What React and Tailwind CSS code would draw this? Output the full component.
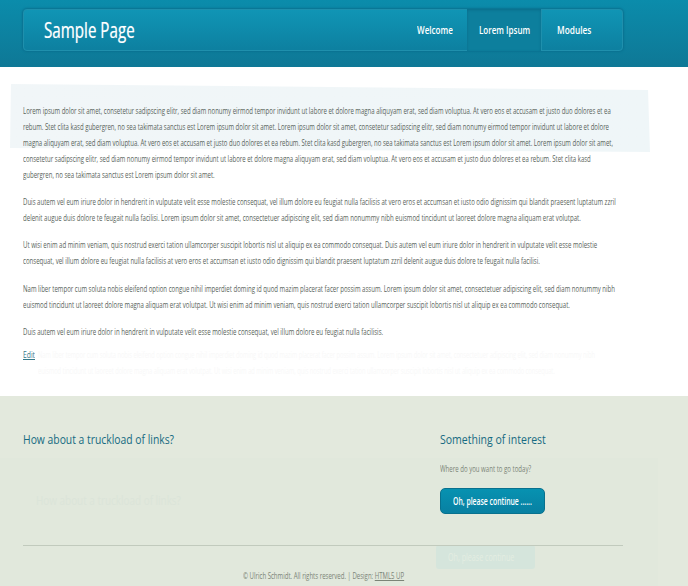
import { useLayoutEffect, useRef } from "react";

// One line of condensed type, set to an exact width.
function Fit({ w, className = "", children }) {
  const ref = useRef(null);
  useLayoutEffect(() => {
    const fit = () => {
      const el = ref.current;
      if (el) el.style.transform = `scaleX(${w / el.offsetWidth})`;
    };
    fit();
    document.fonts.ready.then(fit);
  }, [w]);
  return (
    <span className="block overflow-visible" style={{ width: w }}>
      <span ref={ref} className={`inline-block origin-left whitespace-nowrap ${className}`}>
        {children}
      </span>
    </span>
  );
}

const paragraphs = [
  [
    [588, "Lorem ipsum dolor sit amet, consetetur sadipscing elitr, sed diam nonumy eirmod tempor invidunt ut labore et dolore magna aliquyam erat, sed diam voluptua. At vero eos et accusam et justo duo dolores et ea"],
    [586, "rebum. Stet clita kasd gubergren, no sea takimata sanctus est Lorem ipsum dolor sit amet. Lorem ipsum dolor sit amet, consetetur sadipscing elitr, sed diam nonumy eirmod tempor invidunt ut labore et dolore"],
    [590, "magna aliquyam erat, sed diam voluptua. At vero eos et accusam et justo duo dolores et ea rebum. Stet clita kasd gubergren, no sea takimata sanctus est Lorem ipsum dolor sit amet. Lorem ipsum dolor sit amet,"],
    [568, "consetetur sadipscing elitr, sed diam nonumy eirmod tempor invidunt ut labore et dolore magna aliquyam erat, sed diam voluptua. At vero eos et accusam et justo duo dolores et ea rebum. Stet clita kasd"],
    [191.5, "gubergren, no sea takimata sanctus est Lorem ipsum dolor sit amet."],
  ],
  [
    [593, "Duis autem vel eum iriure dolor in hendrerit in vulputate velit esse molestie consequat, vel illum dolore eu feugiat nulla facilisis at vero eros et accumsan et iusto odio dignissim qui blandit praesent luptatum zzril"],
    [558, "delenit augue duis dolore te feugait nulla facilisi. Lorem ipsum dolor sit amet, consectetuer adipiscing elit, sed diam nonummy nibh euismod tincidunt ut laoreet dolore magna aliquam erat volutpat."],
  ],
  [
    [574, "Ut wisi enim ad minim veniam, quis nostrud exerci tation ullamcorper suscipit lobortis nisl ut aliquip ex ea commodo consequat. Duis autem vel eum iriure dolor in hendrerit in vulputate velit esse molestie"],
    [517, "consequat, vel illum dolore eu feugiat nulla facilisis at vero eros et accumsan et iusto odio dignissim qui blandit praesent luptatum zzril delenit augue duis dolore te feugait nulla facilisi."],
  ],
  [
    [592, "Nam liber tempor cum soluta nobis eleifend option congue nihil imperdiet doming id quod mazim placerat facer possim assum. Lorem ipsum dolor sit amet, consectetuer adipiscing elit, sed diam nonummy nibh"],
    [547, "euismod tincidunt ut laoreet dolore magna aliquam erat volutpat. Ut wisi enim ad minim veniam, quis nostrud exerci tation ullamcorper suscipit lobortis nisl ut aliquip ex ea commodo consequat."],
  ],
  [[360, "Duis autem vel eum iriure dolor in hendrerit in vulputate velit esse molestie consequat, vel illum dolore eu feugiat nulla facilisis."]],
];

function Header() {
  return (
    <header className="h-[67px] bg-linear-to-b from-[#0b8cab] to-[#0e7896] pl-[23px] pt-[9px]">
      <div className="flex h-[42px] w-[600px] rounded-[4px] border border-[#1f90ad] bg-linear-to-b from-[#1095b5] to-[#0d80a0] shadow-[0_0_2px_1px_#0a7190] text-white">
        <h1 className="flex-1 pl-[20px] text-[21px] font-medium leading-[41px] [text-shadow:0_0_1px_#fff8]">
          <Fit w={91}>Sample Page</Fit>
        </h1>
        <nav className="flex text-[11px] font-semibold leading-[39px]">
          <a className="w-[50px]"><Fit w={36}>Welcome</Fit></a>
          <a className="-my-px w-[75px] border-r border-[#1f90ad] bg-[#0d7f9d] pl-[12px] pt-px shadow-[inset_0_1px_3px_#0a6c8a]">
            <Fit w={51}>Lorem Ipsum</Fit>
          </a>
          <a className="w-[80px] pl-[15px]"><Fit w={34}>Modules</Fit></a>
        </nav>
      </div>
    </header>
  );
}

export default function App() {
  return (
    <div className="relative h-[586px] w-[688px] overflow-hidden bg-white font-['Open_Sans','Noto_Sans',sans-serif]">
      <Header />

      <main className="relative h-[329px] pl-[23px] pt-[36px] text-[9px] leading-[16px] text-[#59645b]">
        <div className="absolute left-[10px] top-[17px] h-[68px] w-[640px] bg-linear-to-r from-[#f1f6f8] to-[#eff6f8] [clip-path:polygon(1px_0,638px_6px,640px_68px,0_64px)]" />
        <div className="absolute left-[38px] top-[280px] text-[#f8f8f8]">
          <Fit w={557}>{paragraphs[3][0][1]}</Fit>
          <Fit w={517}>{paragraphs[3][1][1]}</Fit>
        </div>
        <div className="relative flex flex-col gap-[11.2px]">
          {paragraphs.map((lines, i) => (
            <p key={i}>
              {lines.map(([w, text]) => (
                <Fit key={text} w={w}>{text}</Fit>
              ))}
            </p>
          ))}
        </div>
        <a className="relative mt-[7px] block text-[#37798a]">
          <Fit w={12} className="underline underline-offset-1">Edit</Fit>
        </a>
      </main>

      <footer className="relative h-[190px] bg-[#e3e9dd] pl-[23px] text-[#7b8477]">
        <div className="absolute left-0 top-[62px] h-[128px] w-[658px] bg-[#e1e8dc]" />
        <div className="absolute left-[36px] top-[94px] text-[13px] leading-[20px] text-[#dbe4d9]">
          <Fit w={145}>How about a truckload of links?</Fit>
        </div>
        <div className="absolute left-[436px] top-[149px] h-[24px] w-[99px] rounded-[3px] bg-[#d5e5dc] pl-[12px] text-[10.5px] font-medium leading-[24px] text-[#e4ede2]">
          <Fit w={66}>Oh, please continue</Fit>
        </div>
        <div className="relative flex h-[150px] w-[600px] border-b border-[#c1cabd] pt-[33px]">
          <section className="w-[417px]">
            <h2 className="text-[13.5px] leading-[20px] text-[#176b82]">
              <Fit w={151}>How about a truckload of links?</Fit>
            </h2>
          </section>
          <section>
            <h2 className="text-[13.5px] leading-[20px] text-[#176b82]">
              <Fit w={106}>Something of interest</Fit>
            </h2>
            <p className="mt-[12px] text-[9px] leading-[16px]">
              <Fit w={91}>Where do you want to go today?</Fit>
            </p>
            <button className="mt-[11px] block h-[26px] w-[105px] rounded-[5px] border border-[#08718e] bg-linear-to-b from-[#0792b1] to-[#0880a2] pl-[12px] text-left text-[10.5px] font-semibold leading-[24px] text-white">
              <Fit w={79}>Oh, please continue ......</Fit>
            </button>
          </section>
        </div>
        <div className="relative pl-[220px] pt-[22px] text-[9px] leading-[16px]">
          <Fit w={161}>
            © Ulrich Schmidt. All rights reserved. | Design: <a className="underline underline-offset-1">HTML5 UP</a>
          </Fit>
        </div>
      </footer>
    </div>
  );
}
